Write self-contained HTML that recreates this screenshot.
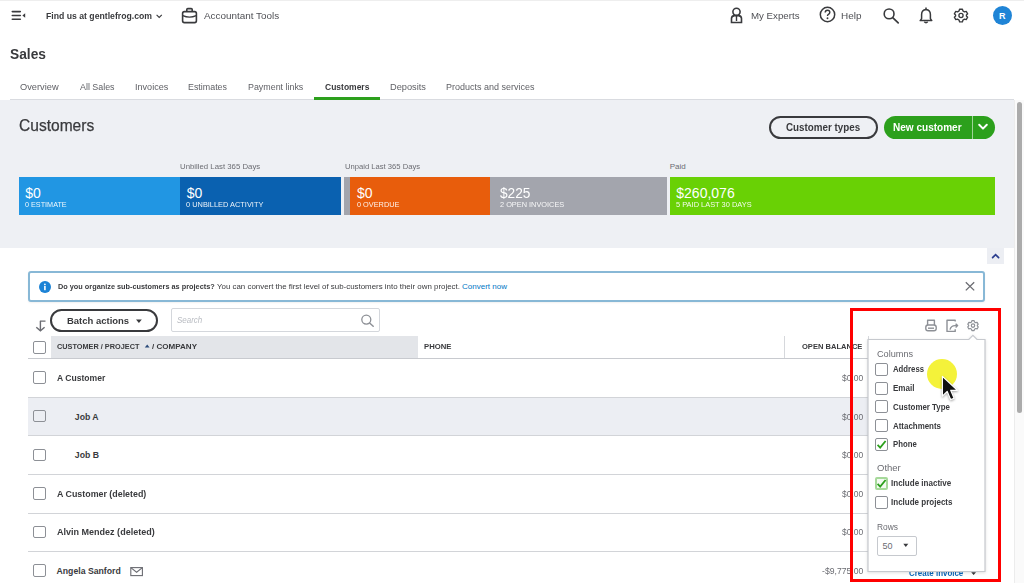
<!DOCTYPE html>
<html><head><meta charset="utf-8"><style>
html,body{margin:0;padding:0;}
body{width:1024px;height:583px;overflow:hidden;position:relative;background:#fff;font-family:"Liberation Sans",sans-serif;}
.a{position:absolute;box-sizing:border-box;}
.t{position:absolute;white-space:nowrap;line-height:1;transform-origin:0 0;}
</style></head><body>
<!-- top strip -->
<div class="a" style="left:0;top:0;width:1024px;height:1px;background:#eeeeee"></div>
<!-- hamburger -->
<svg class="a" style="left:0;top:0" width="40" height="35">
  <g stroke="#393a3d" stroke-width="1.6" stroke-linecap="round">
    <line x1="12.3" y1="11.6" x2="20.3" y2="11.6"/><line x1="12.3" y1="15.5" x2="20.3" y2="15.5"/><line x1="12.3" y1="19.3" x2="20.3" y2="19.3"/>
  </g>
  <path d="M25.2 13.3 L22.4 15.5 L25.2 17.7 Z" fill="#393a3d"/>
</svg>
<!-- chevron -->
<svg class="a" style="left:154px;top:12px" width="10" height="8"><path d="M2.6 2.8 L5.2 5.4 L7.8 2.8" stroke="#393a3d" stroke-width="1.1" fill="none"/></svg>
<!-- briefcase -->
<svg class="a" style="left:180px;top:6px" width="20" height="20">
  <rect x="2.6" y="5.6" width="13.8" height="11" rx="1.8" stroke="#393a3d" stroke-width="1.6" fill="none"/>
  <path d="M6.8 5.6 V3.6 Q6.8 2.6 7.8 2.6 H11.2 Q12.2 2.6 12.2 3.6 V5.6" stroke="#393a3d" stroke-width="1.6" fill="none"/>
  <path d="M2.8 9.6 Q9.5 12.6 16.2 9.6" stroke="#393a3d" stroke-width="1.4" fill="none"/>
</svg>
<!-- my experts icon -->
<svg class="a" style="left:728px;top:5px" width="18" height="20">
  <circle cx="8.5" cy="6.8" r="3.6" stroke="#393a3d" stroke-width="1.6" fill="none"/>
  <path d="M3.5 17.5 V13.6 Q3.5 10.8 6.5 10.6 H10.5 Q13.5 10.8 13.5 13.6 V17.5 Z" stroke="#393a3d" stroke-width="1.6" fill="none"/>
  <path d="M8.5 11 V16" stroke="#393a3d" stroke-width="1.4"/>
</svg>
<!-- help icon -->
<svg class="a" style="left:817px;top:4px" width="22" height="22">
  <circle cx="10.5" cy="10.5" r="7.2" stroke="#393a3d" stroke-width="1.5" fill="none"/>
  <path d="M8.2 8.6 Q8.2 6.3 10.5 6.3 Q12.8 6.3 12.8 8.4 Q12.8 9.8 11.2 10.5 Q10.5 10.9 10.5 11.9" stroke="#393a3d" stroke-width="1.4" fill="none"/>
  <circle cx="10.5" cy="14.3" r="0.95" fill="#393a3d"/>
</svg>
<!-- search icon -->
<svg class="a" style="left:880px;top:4px" width="22" height="22">
  <circle cx="9.1" cy="9.9" r="4.9" stroke="#393a3d" stroke-width="1.6" fill="none"/>
  <path d="M12.7 13.6 L18.2 18.8" stroke="#393a3d" stroke-width="1.7" stroke-linecap="round"/>
</svg>
<!-- bell -->
<svg class="a" style="left:916px;top:4px" width="20" height="22">
  <path d="M4.2 16.6 H15.8 L14.4 14.6 V10.4 Q14.4 5.8 10 5.4 Q5.6 5.8 5.6 10.4 V14.6 Z" stroke="#393a3d" stroke-width="1.5" fill="none" stroke-linejoin="round"/>
  <path d="M10 3.6 V5.3" stroke="#393a3d" stroke-width="1.5"/>
  <path d="M8.3 17.8 Q10 19.6 11.7 17.8" stroke="#393a3d" stroke-width="1.5" fill="none"/>
</svg>
<!-- gear top -->
<svg class="a" style="left:950px;top:4px" width="22" height="22" viewBox="0 0 22 22">
  <g transform="translate(11,11.5) scale(0.9)">
    <path id="gearp" d="M-1.6 -7 H1.6 L2.1 -5.1 L3.9 -4.1 L5.8 -4.6 L7.4 -1.9 L6 -0.5 V0.5 L7.4 1.9 L5.8 4.6 L3.9 4.1 L2.1 5.1 L1.6 7 H-1.6 L-2.1 5.1 L-3.9 4.1 L-5.8 4.6 L-7.4 1.9 L-6 0.5 V-0.5 L-7.4 -1.9 L-5.8 -4.6 L-3.9 -4.1 L-2.1 -5.1 Z" stroke="#393a3d" stroke-width="1.5" fill="none" stroke-linejoin="round"/>
    <circle r="2.3" stroke="#393a3d" stroke-width="1.5" fill="none"/>
  </g>
</svg>
<!-- avatar -->
<div class="a" style="left:992.5px;top:5.8px;width:19.2px;height:19.2px;border-radius:50%;background:#1f84d6"></div>
<div class="t" style="left:999px;top:11.7px;font-size:9px;font-weight:700;color:#fff">R</div>

<!-- tabs separator and underline -->
<div class="a" style="left:10px;top:99px;width:1004px;height:1px;background:#d9dbe0"></div>
<div class="a" style="left:0;top:100px;width:1014px;height:148px;background:#eef0f4"></div>
<div class="a" style="left:314px;top:97.2px;width:65.5px;height:2.4px;background:#2ca01c"></div>

<!-- buttons -->
<div class="a" style="left:769px;top:115.8px;width:108.5px;height:22.8px;border:2px solid #393a3d;border-radius:12px;background:transparent"></div>
<div class="a" style="left:883.7px;top:115.8px;width:111px;height:22.8px;border-radius:12px;background:#2ca01c"></div>
<div class="a" style="left:971.8px;top:115.8px;width:0.8px;height:22.8px;background:rgba(255,255,255,0.55)"></div>
<svg class="a" style="left:976px;top:121px" width="14" height="12"><path d="M3.2 3.8 L7 7.6 L10.8 3.8" stroke="#fff" stroke-width="2" fill="none" stroke-linecap="round" stroke-linejoin="round"/></svg>

<!-- bars -->
<div class="a" style="left:18.5px;top:177px;width:161.5px;height:38.3px;background:#2196e3"></div>
<div class="a" style="left:180px;top:177px;width:160.7px;height:38.3px;background:#0a61b0"></div>
<div class="a" style="left:344px;top:177px;width:6.4px;height:38.3px;background:#a3a5ad"></div>
<div class="a" style="left:350.4px;top:177px;width:139.6px;height:38.3px;background:#e85d0c"></div>
<div class="a" style="left:490px;top:177px;width:176.6px;height:38.3px;background:#a3a5ad"></div>
<div class="a" style="left:669.7px;top:177px;width:325.3px;height:38.3px;background:#69d105"></div>

<!-- scrollbar -->
<div class="a" style="left:1014px;top:100px;width:10px;height:483px;background:#fafafa;border-left:1px solid #ececec"></div>
<div class="a" style="left:1016.9px;top:102.3px;width:5.2px;height:311px;border-radius:3px;background:#ababab"></div>
<!-- scroll up button -->
<div class="a" style="left:987.4px;top:248px;width:16.8px;height:15.6px;background:#eceef3"></div>
<svg class="a" style="left:987.4px;top:248px" width="17" height="16"><path d="M5.6 9.6 L8.6 6.6 L11.6 9.6" stroke="#2c3f8f" stroke-width="1.7" fill="none" stroke-linecap="round"/></svg>

<!-- banner -->
<div class="a" style="left:28px;top:270.8px;width:957.2px;height:30.8px;border:2px solid #88b8d6;border-radius:3px;background:#fff;box-shadow:0 1px 2px rgba(0,0,0,0.06)"></div>
<div class="a" style="left:39px;top:280.8px;width:11.8px;height:11.8px;border-radius:50%;background:#1c83d6"></div>
<svg class="a" style="left:39px;top:280.8px" width="12" height="12"><circle cx="5.9" cy="3.3" r="0.9" fill="#fff"/><rect x="5.1" y="4.9" width="1.6" height="4.3" fill="#fff"/></svg>
<svg class="a" style="left:962px;top:279px" width="16" height="15"><path d="M3.8 3.2 L12.2 11.4 M12.2 3.2 L3.8 11.4" stroke="#6b6c72" stroke-width="1.3"/></svg>

<!-- sort icon -->
<svg class="a" style="left:33px;top:317px" width="16" height="17">
  <path d="M6.9 4.1 H12.5 M7.4 4.1 V13.6" stroke="#6b6c72" stroke-width="1.4" fill="none"/>
  <path d="M3.3 10.3 L7.4 13.9 L11.6 10.3" stroke="#6b6c72" stroke-width="1.4" fill="none"/>
</svg>
<!-- batch actions button -->
<div class="a" style="left:49.7px;top:309.2px;width:108.6px;height:22.6px;border:2px solid #393a3d;border-radius:12px;background:#fff"></div>
<svg class="a" style="left:134px;top:317px" width="10" height="8"><path d="M2 2.5 H7.8 L4.9 6 Z" fill="#393a3d"/></svg>
<!-- search box -->
<div class="a" style="left:171.2px;top:308.4px;width:208.5px;height:23.2px;border:1px solid #d4d7dc;border-radius:2px;background:#fff"></div>
<svg class="a" style="left:358px;top:312px" width="18" height="17">
  <circle cx="8.3" cy="7.6" r="4.5" stroke="#8d9096" stroke-width="1.3" fill="none"/>
  <path d="M11.6 11 L15.2 14.2" stroke="#8d9096" stroke-width="1.5" stroke-linecap="round"/>
</svg>

<!-- table header -->
<div class="a" style="left:51.2px;top:336px;width:366.6px;height:22px;background:#e3e5e9"></div>
<div class="a" style="left:784px;top:336px;width:1px;height:22px;background:#d6d8dc"></div>
<div class="a" style="left:868px;top:336px;width:1px;height:22px;background:#d6d8dc"></div>
<div class="a" style="left:28px;top:357.6px;width:957px;height:1.2px;background:#c8cacf"></div>
<svg class="a" style="left:143.5px;top:343px" width="7" height="6"><path d="M0.8 4.4 L3.2 1.6 L5.6 4.4 Z" fill="#2a4a7a"/></svg>
<div class="a" style="left:33.3px;top:341px;width:12.8px;height:12.8px;border:1px solid #8d9096;border-radius:2px;background:#fff"></div>

<!-- rows -->
<div class="a" style="left:28px;top:397px;width:957px;height:38.6px;background:#eceef3"></div>
<div class="a" style="left:28px;top:396.8px;width:957px;height:1px;background:#d2d4d8"></div>
<div class="a" style="left:28px;top:435.4px;width:957px;height:1px;background:#d2d4d8"></div>
<div class="a" style="left:28px;top:474px;width:957px;height:1px;background:#d2d4d8"></div>
<div class="a" style="left:28px;top:512.6px;width:957px;height:1px;background:#d2d4d8"></div>
<div class="a" style="left:28px;top:551.2px;width:957px;height:1px;background:#d2d4d8"></div>
<div class="a" style="left:33.4px;top:371.3px;width:12.6px;height:12.6px;border:1px solid #8d9096;border-radius:2px;background:#fff"></div>
<div class="a" style="left:33.4px;top:409.9px;width:12.6px;height:12.6px;border:1px solid #8d9096;border-radius:2px;background:#eceef3"></div>
<div class="a" style="left:33.4px;top:448.5px;width:12.6px;height:12.6px;border:1px solid #8d9096;border-radius:2px;background:#fff"></div>
<div class="a" style="left:33.4px;top:487.1px;width:12.6px;height:12.6px;border:1px solid #8d9096;border-radius:2px;background:#fff"></div>
<div class="a" style="left:33.4px;top:525.7px;width:12.6px;height:12.6px;border:1px solid #8d9096;border-radius:2px;background:#fff"></div>
<div class="a" style="left:33.4px;top:564.3px;width:12.6px;height:12.6px;border:1px solid #8d9096;border-radius:2px;background:#fff"></div>
<svg class="a" style="left:970px;top:571px" width="8" height="6"><path d="M1.2 1.2 H6 L3.6 4 Z" fill="#393a3d"/></svg>
<!-- envelope -->
<svg class="a" style="left:129px;top:565px" width="16" height="12">
  <rect x="1.8" y="2.6" width="11.6" height="8" stroke="#6b6c72" stroke-width="1.1" fill="none"/>
  <path d="M1.8 2.6 L7.6 7.2 L13.4 2.6" stroke="#6b6c72" stroke-width="1.1" fill="none"/>
</svg>

<div class="a" style="left:0;top:0;width:1024px;height:583px;z-index:5">
<!-- popup icons -->
<svg class="a" style="left:922px;top:317px" width="60" height="18">
  <g stroke="#8d9096" stroke-width="1.4" fill="none" stroke-linejoin="round">
    <path d="M5.6 8 V3.2 H12.4 V8"/>
    <rect x="3.8" y="8" width="10.4" height="5.8" rx="2.2"/>
    <path d="M6 11.2 H12"/>
    <path d="M33.2 4.6 V3.2 H25 V14.4 H33.2 V12.2"/>
    <path d="M28 12.6 Q29 8.6 33 8.6 H35"/>
    <path d="M33.6 6.8 L35.6 8.6 L33.6 10.4" />
  </g>
  <g transform="translate(51,8.6) scale(0.86)">
    <path d="M-1.3 -5.8 H1.3 L1.7 -4.2 L3.2 -3.4 L4.8 -3.8 L6.1 -1.6 L5 -0.4 V0.4 L6.1 1.6 L4.8 3.8 L3.2 3.4 L1.7 4.2 L1.3 5.8 H-1.3 L-1.7 4.2 L-3.2 3.4 L-4.8 3.8 L-6.1 1.6 L-5 0.4 V-0.4 L-6.1 -1.6 L-4.8 -3.8 L-3.2 -3.4 L-1.7 -4.2 Z" stroke="#8d9096" stroke-width="1.35" fill="none" stroke-linejoin="round"/>
    <circle r="2" stroke="#8d9096" stroke-width="1.35" fill="none"/>
  </g>
</svg>

<!-- popup panel -->
<svg class="a" style="left:860px;top:330px" width="135" height="250">
  <path d="M8 9.5 H108.8 L112.9 5.3 L117 9.5 H125 V241.5 H8 Z" fill="#fff" stroke="#c6c9ce" stroke-width="1.2" style="filter:drop-shadow(0 1.5px 1.5px rgba(0,0,0,0.12))"/>
</svg>
<!-- popup checkboxes -->
<div class="a" style="left:875.2px;top:363px;width:12.9px;height:12.9px;border:1px solid #8d9096;border-radius:2px"></div>
<div class="a" style="left:875.2px;top:381.7px;width:12.9px;height:12.9px;border:1px solid #8d9096;border-radius:2px"></div>
<div class="a" style="left:875.2px;top:400.4px;width:12.9px;height:12.9px;border:1px solid #8d9096;border-radius:2px"></div>
<div class="a" style="left:875.2px;top:419.1px;width:12.9px;height:12.9px;border:1px solid #8d9096;border-radius:2px"></div>
<div class="a" style="left:875.2px;top:437.8px;width:12.9px;height:12.9px;border:1px solid #8d9096;border-radius:2px"></div>
<svg class="a" style="left:875.2px;top:437.8px" width="13" height="13"><path d="M2.6 6.8 L5.2 9.6 L10.6 3" stroke="#2ca01c" stroke-width="1.8" fill="none"/></svg>
<div class="a" style="left:875.4px;top:476.9px;width:12.8px;height:12.8px;border:2px solid #a6d99a;border-radius:2px;background:#f3faf1"></div>
<svg class="a" style="left:875.4px;top:476.9px" width="13" height="13"><path d="M2.6 6.8 L5.2 9.6 L10.6 3" stroke="#2ca01c" stroke-width="1.8" fill="none"/></svg>
<div class="a" style="left:875.4px;top:496.1px;width:12.6px;height:12.6px;border:1px solid #8d9096;border-radius:2px"></div>
<!-- rows select -->
<div class="a" style="left:876.5px;top:535.8px;width:40.1px;height:20.2px;border:1px solid #c6c9ce;border-radius:2px;background:#fff"></div>
<svg class="a" style="left:901px;top:542px" width="10" height="8"><path d="M2.3 1.8 H7.3 L4.8 5 Z" fill="#393a3d"/></svg>

</div>
<div class="a" style="left:0;top:0;width:1024px;height:583px;z-index:7">
<!-- yellow highlight -->
<div class="a" style="left:926.5px;top:358.7px;width:30.8px;height:30.8px;border-radius:50%;background:#f4f23a"></div>
<!-- cursor -->
<svg class="a" style="left:936px;top:372px" width="30" height="32">
  <path d="M6.4 4.4 V24.1 L11.2 19.5 L14.6 27.6 L18.1 26.2 L14.7 18.3 L21.4 18.3 Z" fill="#111" stroke="#fff" stroke-width="1.2" stroke-linejoin="round" style="filter:drop-shadow(0.5px 1px 1px rgba(0,0,0,0.35))"/>
</svg>

<!-- red rectangle -->
<div class="a" style="left:849.5px;top:308.3px;width:151.2px;height:274px;border:3px solid #ff0000"></div>
</div>

<div class="t" id="t0" style="left:45.70px;top:12.18px;font-size:9px;font-weight:700;color:#393a3d;transform:scaleX(0.9635);">Find us at gentlefrog.com</div>
<div class="t" id="t1" style="left:204.00px;top:10.76px;font-size:9.5px;font-weight:400;color:#4f5055;transform:scaleX(1.0417);">Accountant Tools</div>
<div class="t" id="t2" style="left:750.50px;top:10.76px;font-size:9.5px;font-weight:400;color:#4f5055;transform:scaleX(1.0207);">My Experts</div>
<div class="t" id="t3" style="left:841.00px;top:10.76px;font-size:9.5px;font-weight:400;color:#4f5055;transform:scaleX(1.0436);">Help</div>
<div class="t" id="t4" style="left:10.30px;top:45.53px;font-size:15.2px;font-weight:700;color:#393a3d;transform:scaleX(0.9067);">Sales</div>
<div class="t" id="t5" style="left:20.00px;top:82.26px;font-size:9.5px;font-weight:400;color:#606166;transform:scaleX(0.9749);">Overview</div>
<div class="t" id="t6" style="left:79.50px;top:82.26px;font-size:9.5px;font-weight:400;color:#606166;transform:scaleX(0.9332);">All Sales</div>
<div class="t" id="t7" style="left:134.60px;top:82.26px;font-size:9.5px;font-weight:400;color:#606166;transform:scaleX(0.9553);">Invoices</div>
<div class="t" id="t8" style="left:188.40px;top:82.26px;font-size:9.5px;font-weight:400;color:#606166;transform:scaleX(0.9348);">Estimates</div>
<div class="t" id="t9" style="left:248.30px;top:82.26px;font-size:9.5px;font-weight:400;color:#606166;transform:scaleX(0.9351);">Payment links</div>
<div class="t" id="t10" style="left:389.60px;top:82.26px;font-size:9.5px;font-weight:400;color:#606166;transform:scaleX(0.9738);">Deposits</div>
<div class="t" id="t11" style="left:446.40px;top:82.26px;font-size:9.5px;font-weight:400;color:#606166;transform:scaleX(0.9458);">Products and services</div>
<div class="t" id="t12" style="left:324.60px;top:82.26px;font-size:9.5px;font-weight:700;color:#393a3d;transform:scaleX(0.8947);">Customers</div>
<div class="t" id="t13" style="left:18.50px;top:116.99px;font-size:16.2px;font-weight:400;color:#393a3d;transform:scaleX(0.9608);-webkit-text-stroke:0.25px #393a3d;">Customers</div>
<div class="t" id="t14" style="left:785.80px;top:122.41px;font-size:10.5px;font-weight:700;color:#393a3d;transform:scaleX(0.9350);">Customer types</div>
<div class="t" id="t15" style="left:893.30px;top:122.41px;font-size:10.5px;font-weight:700;color:#ffffff;transform:scaleX(0.9557);">New customer</div>
<div class="t" id="t16" style="left:179.80px;top:162.53px;font-size:8px;font-weight:400;color:#6b6c72;transform:scaleX(0.9747);">Unbilled Last 365 Days</div>
<div class="t" id="t17" style="left:344.50px;top:162.53px;font-size:8px;font-weight:400;color:#6b6c72;transform:scaleX(0.9540);">Unpaid Last 365 Days</div>
<div class="t" id="t18" style="left:669.70px;top:162.53px;font-size:8px;font-weight:400;color:#6b6c72;">Paid</div>
<div class="t" id="t19" style="left:25.20px;top:185.75px;font-size:14px;font-weight:400;color:#ffffff;">$0</div>
<div class="t" id="t20" style="left:186.70px;top:185.75px;font-size:14px;font-weight:400;color:#ffffff;">$0</div>
<div class="t" id="t21" style="left:357.00px;top:185.75px;font-size:14px;font-weight:400;color:#ffffff;">$0</div>
<div class="t" id="t22" style="left:499.60px;top:185.75px;font-size:14px;font-weight:400;color:#ffffff;transform:scaleX(0.9789);">$225</div>
<div class="t" id="t23" style="left:676.30px;top:185.75px;font-size:14px;font-weight:400;color:#ffffff;">$260,076</div>
<div class="t" id="t24" style="left:25.20px;top:201.23px;font-size:8px;font-weight:400;color:rgba(255,255,255,0.92);transform:scaleX(0.9047);">0 ESTIMATE</div>
<div class="t" id="t25" style="left:186.30px;top:201.23px;font-size:8px;font-weight:400;color:rgba(255,255,255,0.92);transform:scaleX(0.9259);">0 UNBILLED ACTIVITY</div>
<div class="t" id="t26" style="left:357.00px;top:201.23px;font-size:8px;font-weight:400;color:rgba(255,255,255,0.92);transform:scaleX(0.9171);">0 OVERDUE</div>
<div class="t" id="t27" style="left:499.80px;top:201.23px;font-size:8px;font-weight:400;color:rgba(255,255,255,0.92);transform:scaleX(0.9198);">2 OPEN INVOICES</div>
<div class="t" id="t28" style="left:676.30px;top:201.23px;font-size:8px;font-weight:400;color:rgba(255,255,255,0.92);transform:scaleX(0.9290);">5 PAID LAST 30 DAYS</div>
<div class="t" id="t29" style="left:57.60px;top:282.63px;font-size:8px;font-weight:700;color:#393a3d;transform:scaleX(0.9155);">Do you organize sub-customers as projects?</div>
<div class="t" id="t30" style="left:216.50px;top:282.63px;font-size:8px;font-weight:400;color:#393a3d;transform:scaleX(0.9872);">You can convert the first level of sub-customers into their own project.</div>
<div class="t" id="t31" style="left:462.00px;top:282.63px;font-size:8px;font-weight:400;color:#0077c5;">Convert now</div>
<div class="t" id="t32" style="left:66.90px;top:315.76px;font-size:9.5px;font-weight:700;color:#393a3d;transform:scaleX(0.9968);">Batch actions</div>
<div class="t" id="t33" style="left:177.20px;top:315.60px;font-size:8.5px;font-weight:400;color:#b9bcc2;transform:scaleX(0.9392);font-style:italic;">Search</div>
<div class="t" id="t34" style="left:57.10px;top:343.03px;font-size:8px;font-weight:700;color:#393a3d;transform:scaleX(0.9146);">CUSTOMER / PROJECT</div>
<div class="t" id="t35" style="left:152.40px;top:343.03px;font-size:8px;font-weight:700;color:#393a3d;transform:scaleX(1.0056);">/ COMPANY</div>
<div class="t" id="t36" style="left:423.70px;top:343.23px;font-size:8px;font-weight:700;color:#393a3d;transform:scaleX(0.9630);">PHONE</div>
<div class="t" id="t37" style="left:802.20px;top:342.83px;font-size:8px;font-weight:700;color:#393a3d;transform:scaleX(0.9435);">OPEN BALANCE</div>
<div class="t" id="t38" style="left:57.10px;top:374.04px;font-size:8.7px;font-weight:700;color:#393a3d;transform:scaleX(0.9873);">A Customer</div>
<div class="t" id="t39" style="left:841.70px;top:374.04px;font-size:8.7px;font-weight:400;color:#6b6c72;transform:scaleX(0.9747);">$0.00</div>
<div class="t" id="t40" style="left:74.80px;top:412.64px;font-size:8.7px;font-weight:700;color:#393a3d;">Job A</div>
<div class="t" id="t41" style="left:841.70px;top:412.64px;font-size:8.7px;font-weight:400;color:#6b6c72;transform:scaleX(0.9747);">$0.00</div>
<div class="t" id="t42" style="left:74.80px;top:451.24px;font-size:8.7px;font-weight:700;color:#393a3d;">Job B</div>
<div class="t" id="t43" style="left:841.70px;top:451.24px;font-size:8.7px;font-weight:400;color:#6b6c72;transform:scaleX(0.9747);">$0.00</div>
<div class="t" id="t44" style="left:56.50px;top:489.84px;font-size:8.7px;font-weight:700;color:#393a3d;transform:scaleX(1.0202);">A Customer (deleted)</div>
<div class="t" id="t45" style="left:841.70px;top:489.84px;font-size:8.7px;font-weight:400;color:#6b6c72;transform:scaleX(0.9747);">$0.00</div>
<div class="t" id="t46" style="left:56.50px;top:528.44px;font-size:8.7px;font-weight:700;color:#393a3d;transform:scaleX(1.0380);">Alvin Mendez (deleted)</div>
<div class="t" id="t47" style="left:841.70px;top:528.44px;font-size:8.7px;font-weight:400;color:#6b6c72;transform:scaleX(0.9747);">$0.00</div>
<div class="t" id="t48" style="left:56.50px;top:567.04px;font-size:8.7px;font-weight:700;color:#393a3d;">Angela Sanford</div>
<div class="t" id="t49" style="left:821.90px;top:567.04px;font-size:8.7px;font-weight:400;color:#6b6c72;transform:scaleX(0.9941);">-$9,775.00</div>
<div class="t" id="t50" style="left:909.40px;top:569.24px;font-size:8.7px;font-weight:700;color:#0a66b8;transform:scaleX(0.9140);">Create invoice</div>
<div class="t" id="t51" style="left:876.90px;top:350.48px;font-size:9px;font-weight:400;color:#6b6c72;transform:scaleX(1.0193);z-index:6;">Columns</div>
<div class="t" id="t52" style="left:892.50px;top:365.40px;font-size:8.5px;font-weight:700;color:#393a3d;transform:scaleX(0.9113);z-index:6;">Address</div>
<div class="t" id="t53" style="left:892.50px;top:384.10px;font-size:8.5px;font-weight:700;color:#393a3d;transform:scaleX(0.9477);z-index:6;">Email</div>
<div class="t" id="t54" style="left:892.50px;top:402.80px;font-size:8.5px;font-weight:700;color:#393a3d;transform:scaleX(0.9306);z-index:6;">Customer Type</div>
<div class="t" id="t55" style="left:892.50px;top:421.50px;font-size:8.5px;font-weight:700;color:#393a3d;transform:scaleX(0.9323);z-index:6;">Attachments</div>
<div class="t" id="t56" style="left:892.50px;top:440.20px;font-size:8.5px;font-weight:700;color:#393a3d;transform:scaleX(0.9121);z-index:6;">Phone</div>
<div class="t" id="t57" style="left:877.10px;top:464.28px;font-size:9px;font-weight:400;color:#6b6c72;transform:scaleX(1.0570);z-index:6;">Other</div>
<div class="t" id="t58" style="left:890.70px;top:479.20px;font-size:8.5px;font-weight:700;color:#393a3d;transform:scaleX(0.9454);z-index:6;">Include inactive</div>
<div class="t" id="t59" style="left:890.70px;top:498.40px;font-size:8.5px;font-weight:700;color:#393a3d;transform:scaleX(0.9434);z-index:6;">Include projects</div>
<div class="t" id="t60" style="left:877.00px;top:522.58px;font-size:9px;font-weight:400;color:#6b6c72;transform:scaleX(0.9327);z-index:6;">Rows</div>
<div class="t" id="t61" style="left:882.60px;top:541.98px;font-size:9px;font-weight:400;color:#6b6c72;z-index:6;">50</div>
</body></html>
